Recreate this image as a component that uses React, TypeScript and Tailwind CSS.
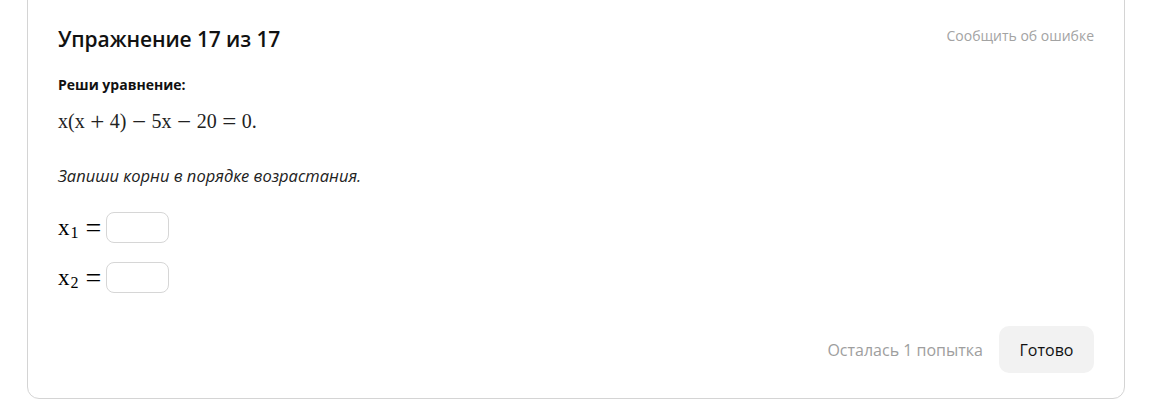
const SANS = '"Open Sans", "Noto Sans", sans-serif';
const SERIF = '"Liberation Serif", "DejaVu Serif", serif';

function Op({ c }: { c: string }) {
  return <span className="mx-[5.5px] text-[25px] leading-none">{c}</span>;
}

function AnswerRow({ sub }: { sub: string }) {
  return (
    <div className="flex items-center h-[31px]" style={{ fontFamily: SERIF }}>
      <span className="text-[23px] leading-none">x</span>
      <span className="text-[16px] leading-none relative top-[5px] ml-[1px]">{sub}</span>
      <span className="ml-[7px] mr-[5px] text-[28px] leading-none">=</span>
      <input
        type="text"
        className="w-[63px] h-[31px] rounded-[8px] border border-[#d6d6d6] bg-white outline-none"
      />
    </div>
  );
}

export default function App() {
  return (
    <div className="w-[1149px] h-[403px] bg-white overflow-hidden" style={{ fontFamily: SANS }}>
      <div className="ml-[27px] -mt-[12px] w-[1098px] h-[411px] rounded-[12px] border border-[#d4d4d4] bg-white px-[30px] pt-[36px] pb-[25px] flex flex-col">
        <div className="flex justify-between items-start">
          <h1 className="text-[21px] font-semibold leading-[28px] text-[#111] tracking-[-0.1px]">
            Упражнение 17 из 17
          </h1>
          <button className="text-[14px] leading-[20px] text-[#a3a3a3] mt-[1px]">
            Сообщить об ошибке
          </button>
        </div>

        <p className="mt-[22px] text-[14px] font-bold leading-[20px] text-[#111]">Реши уравнение:</p>

        <p
          className="mt-[14px] flex items-center h-[24px] text-[20px] leading-[24px] text-[#222]"
          style={{ fontFamily: SERIF }}
        >
          <span>x(x</span>
          <Op c="+" />
          <span>4)</span>
          <Op c="−" />
          <span>5x</span>
          <Op c="−" />
          <span>20</span>
          <Op c="=" />
          <span>0.</span>
        </p>

        <p className="mt-[32px] text-[16.5px] italic leading-[22px] text-[#222]">
          Запиши корни в порядке возрастания.
        </p>

        <div className="mt-[25px] flex flex-col gap-[19px]">
          <AnswerRow sub="1" />
          <AnswerRow sub="2" />
        </div>

        <div className="mt-auto flex items-center justify-end gap-[16px]">
          <span className="text-[16px] text-[#9e9e9e]">Осталась 1 попытка</span>
          <button className="w-[95px] h-[47px] rounded-[10px] bg-[#f2f2f2] text-[16px] text-[#111]">
            Готово
          </button>
        </div>
      </div>
    </div>
  );
}
